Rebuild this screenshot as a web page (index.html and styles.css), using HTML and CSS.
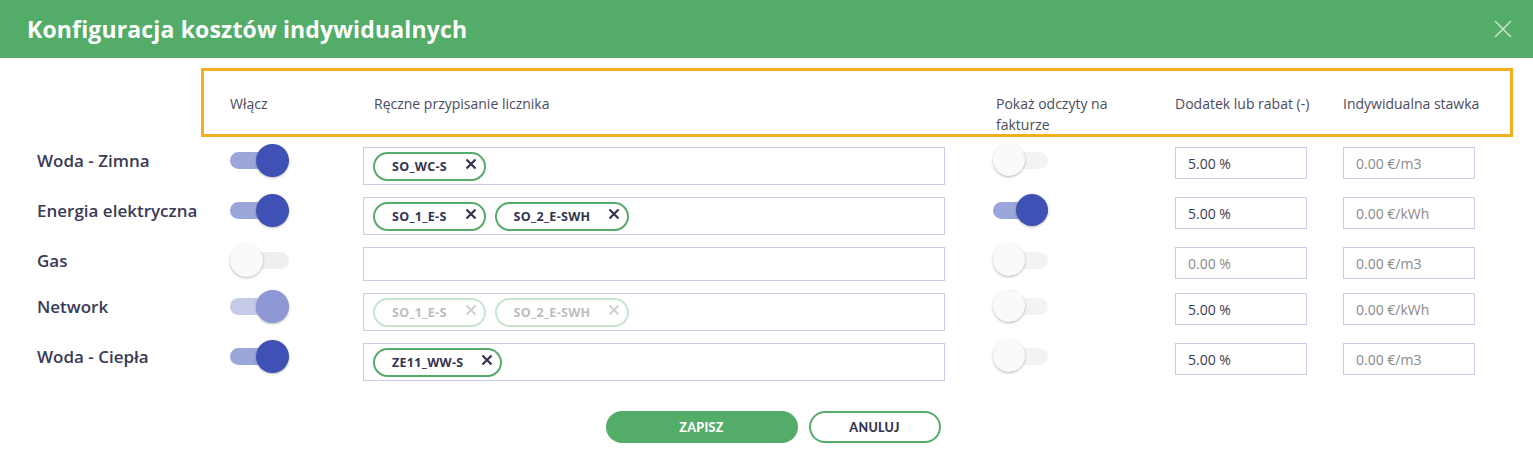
FILE: index.html
```html
<!DOCTYPE html>
<html lang="pl">
<head>
<meta charset="utf-8">
<title>Konfiguracja kosztów indywidualnych</title>
<link rel="stylesheet" href="styles.css">
</head>
<body>
<div class="modal">
  <header class="modal-head">
    <h1 class="modal-title">Konfiguracja kosztów indywidualnych</h1>
    <button class="close-btn" aria-label="Zamknij">
      <svg width="18" height="18" viewBox="0 0 18 18"><path d="M1 1 L17 17 M17 1 L1 17" stroke="currentColor" stroke-width="1.6" fill="none"/></svg>
    </button>
  </header>

  <div class="modal-body">
    <div class="col-head">
      <div class="ch ch-toggle">Włącz</div>
      <div class="ch ch-chips">Ręczne przypisanie licznika</div>
      <div class="ch ch-show"><span class="ch-wrap">Pokaż odczyty na fakturze</span></div>
      <div class="ch ch-add">Dodatek lub rabat (-)</div>
      <div class="ch ch-rate">Indywidualna stawka</div>
    </div>

    <div class="rows">
      <div class="row">
        <div class="row-label">Woda - Zimna</div>
        <div class="cell-toggle"><span class="switch on"><span class="track"></span><span class="thumb"></span></span></div>
        <div class="chip-box">
          <span class="chip">SO_WC-S<svg class="chip-x" viewBox="0 0 12 12"><path d="M1.5 1.5 L10.5 10.5 M10.5 1.5 L1.5 10.5"/></svg></span>
        </div>
        <div class="cell-show"><span class="switch small"><span class="track"></span><span class="thumb"></span></span></div>
        <div class="cell-input"><div class="field">5.00 %</div></div>
        <div class="cell-input"><div class="field muted">0.00 €/m3</div></div>
      </div>

      <div class="row">
        <div class="row-label">Energia elektryczna</div>
        <div class="cell-toggle"><span class="switch on"><span class="track"></span><span class="thumb"></span></span></div>
        <div class="chip-box">
          <span class="chip">SO_1_E-S<svg class="chip-x" viewBox="0 0 12 12"><path d="M1.5 1.5 L10.5 10.5 M10.5 1.5 L1.5 10.5"/></svg></span>
          <span class="chip">SO_2_E-SWH<svg class="chip-x" viewBox="0 0 12 12"><path d="M1.5 1.5 L10.5 10.5 M10.5 1.5 L1.5 10.5"/></svg></span>
        </div>
        <div class="cell-show"><span class="switch small on"><span class="track"></span><span class="thumb"></span></span></div>
        <div class="cell-input"><div class="field">5.00 %</div></div>
        <div class="cell-input"><div class="field muted">0.00 €/kWh</div></div>
      </div>

      <div class="row">
        <div class="row-label">Gas</div>
        <div class="cell-toggle"><span class="switch"><span class="track"></span><span class="thumb"></span></span></div>
        <div class="chip-box empty"></div>
        <div class="cell-show"><span class="switch small"><span class="track"></span><span class="thumb"></span></span></div>
        <div class="cell-input"><div class="field muted">0.00 %</div></div>
        <div class="cell-input"><div class="field muted">0.00 €/m3</div></div>
      </div>

      <div class="row">
        <div class="row-label">Network</div>
        <div class="cell-toggle"><span class="switch on disabled"><span class="track"></span><span class="thumb"></span></span></div>
        <div class="chip-box disabled">
          <span class="chip">SO_1_E-S<svg class="chip-x" viewBox="0 0 12 12"><path d="M1.5 1.5 L10.5 10.5 M10.5 1.5 L1.5 10.5"/></svg></span>
          <span class="chip">SO_2_E-SWH<svg class="chip-x" viewBox="0 0 12 12"><path d="M1.5 1.5 L10.5 10.5 M10.5 1.5 L1.5 10.5"/></svg></span>
        </div>
        <div class="cell-show"><span class="switch small"><span class="track"></span><span class="thumb"></span></span></div>
        <div class="cell-input"><div class="field">5.00 %</div></div>
        <div class="cell-input"><div class="field muted">0.00 €/kWh</div></div>
      </div>

      <div class="row">
        <div class="row-label">Woda - Ciepła</div>
        <div class="cell-toggle"><span class="switch on"><span class="track"></span><span class="thumb"></span></span></div>
        <div class="chip-box">
          <span class="chip">ZE11_WW-S<svg class="chip-x" viewBox="0 0 12 12"><path d="M1.5 1.5 L10.5 10.5 M10.5 1.5 L1.5 10.5"/></svg></span>
        </div>
        <div class="cell-show"><span class="switch small"><span class="track"></span><span class="thumb"></span></span></div>
        <div class="cell-input"><div class="field">5.00 %</div></div>
        <div class="cell-input"><div class="field muted">0.00 €/m3</div></div>
      </div>
    </div>

    <div class="actions">
      <button class="btn btn-primary">ZAPISZ</button>
      <button class="btn btn-outline">ANULUJ</button>
    </div>
  </div>
</div>
</body>
</html>
```

FILE: styles.css
```css
* { box-sizing: border-box; }
html, body { margin: 0; padding: 0; background: #ffffff; }
body {
  font-family: "Open Sans", "Liberation Sans", sans-serif;
  color: #3a3a52;
  width: 1533px;
  height: 476px;
  overflow: hidden;
}

.modal-head {
  height: 58px;
  background: #54ac69;
  display: flex;
  align-items: center;
  justify-content: space-between;
  padding: 0 21px 0 27px;
}
.modal-title {
  margin: 0;
  font-size: 23px;
  font-weight: 700;
  color: #ffffff;
  letter-spacing: 0.15px;
}
.close-btn {
  border: 0;
  background: none;
  padding: 0;
  width: 18px;
  height: 18px;
  color: #c4e3cb;
  display: flex;
}

.modal-body {
  padding: 10px 24px 0 37px;
}

.col-head {
  margin-left: 164px;
  margin-right: -4px;
  height: 69px;
  border: 3px solid #f5ae1c;
  padding: 22px 0 0 26px;
  display: flex;
  font-size: 14px;
  line-height: 21px;
  color: #4b4b5e;
}
.ch-toggle { width: 133px; }
.ch-chips { width: 633px; padding-left: 11px; }
.ch-show { width: 179px; }
.ch-wrap { display: block; width: 130px; }
.ch-add { width: 168px; }
.ch-rate { flex: 1; }

.rows {
  margin-top: 10px;
  display: flex;
  flex-direction: column;
  gap: 12px;
}
.row {
  display: grid;
  grid-template-columns: 193px 133px 582px 230px 168px 132px;
  align-items: start;
}
.row-label {
  font-size: 17px;
  font-weight: 600;
  line-height: 28px;
  color: #3a3a55;
}

.cell-toggle, .cell-show {
  height: 26px;
  display: flex;
  align-items: center;
}
.cell-show { padding-left: 48px; }

.switch {
  position: relative;
  display: block;
  width: 59px;
  height: 17px;
}
.switch.small { width: 55px; }
.switch .track {
  display: block;
  width: 100%;
  height: 17px;
  border-radius: 9px;
  background: #efefef;
}
.switch .thumb {
  position: absolute;
  top: -8px;
  left: 0;
  width: 33px;
  height: 33px;
  border-radius: 50%;
  background: #fafafa;
  box-shadow: 0 1px 3px rgba(0,0,0,0.22), 0 1px 1px rgba(0,0,0,0.08);
}
.switch.small .thumb { width: 32px; height: 32px; top: -7.5px; }
.switch.small .track { background: #f3f3f3; }
.switch.on .track { background: #9ba6db; }
.switch.on .thumb { left: auto; right: 0; background: #3f51b5; }
.switch.on.disabled .track { background: #c5cae9; }
.switch.on.disabled .thumb { background: #8c97d4; }

.chip-box {
  min-height: 34px;
  border: 1px solid #c9cde6;
  padding: 4px 9px 3px;
  display: flex;
  flex-wrap: wrap;
  gap: 9px;
  align-items: center;
}
.chip {
  height: 29px;
  border: 2px solid #56ab6a;
  border-radius: 15px;
  padding: 0 7px 0 17px;
  display: inline-flex;
  align-items: center;
  font-size: 12.5px;
  font-weight: 700;
  color: #34344e;
  letter-spacing: 0.3px;
}
.chip-x {
  width: 12px;
  height: 12px;
  margin-left: 18px;
  margin-top: -6px;
  fill: none;
  stroke: #34344e;
  stroke-width: 2.2;
}
.chip-box.disabled .chip { border-color: #c7e5cf; color: #bdbdbd; }
.chip-box.disabled .chip-x { stroke: #cfcfcf; stroke-width: 1.8; }

.field {
  width: 132px;
  height: 32px;
  border: 1px solid #c9cde6;
  padding: 0 12px;
  display: flex;
  align-items: center;
  font-size: 14px;
  color: #3d3d52;
}
.field.muted { color: #8a8a8a; }

.actions {
  margin-top: 30px;
  display: flex;
  justify-content: center;
  gap: 11px;
}
.btn {
  height: 32px;
  border-radius: 16px;
  font-family: "Lato", "Open Sans", sans-serif;
  font-weight: 900;
  font-size: 12.5px;
  letter-spacing: 0.3px;
  cursor: pointer;
}
.btn-primary {
  width: 192px;
  background: #54ac69;
  border: 0;
  color: #ffffff;
}
.btn-outline {
  width: 132px;
  background: #ffffff;
  border: 2px solid #54ac69;
  color: #34344e;
}
```
